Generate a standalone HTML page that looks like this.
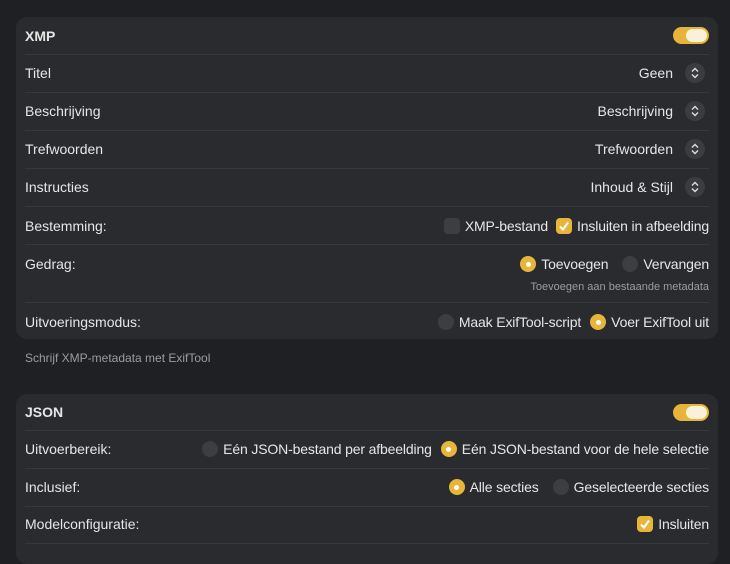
<!DOCTYPE html><html><head><style>
body{margin:0;width:730px;height:548px;background:#1f2023;font-family:"Liberation Sans",sans-serif;color:#e6e6e6;position:relative;overflow:hidden;font-size:14px}
.p{position:absolute;left:16px;width:702px;background:#2a2b2e;border-radius:11px}
.t{position:absolute;white-space:nowrap;line-height:16px}
.sep{position:absolute;left:25px;width:684px;height:1px;background:#36383b}
.tg{position:absolute;left:673px;width:36px;height:17px;border-radius:9px;background:#e6b43a}
.tg:after{content:"";position:absolute;right:2px;top:2px;width:21px;height:13px;border-radius:7px;background:#fbf1d8}
.st{position:absolute;left:685px;width:20px;height:20px;border-radius:50%;background:#3b3c40}
.st svg{position:absolute;left:5px;top:3px}
.row{position:absolute;right:21px;display:flex;align-items:center;height:16px;white-space:nowrap;letter-spacing:-0.15px}
.row span{margin-left:5px}
.r{width:16px;height:16px;border-radius:50%;background:#3d3e42;position:relative;flex:none;margin-left:9px}
.r.on{background:#e8b53b}.r.on:after{content:"";position:absolute;left:5.5px;top:5.5px;width:5px;height:5px;border-radius:50%;background:#fff}
.c{width:16px;height:16px;border-radius:4px;background:#3d3e42;flex:none;margin-left:8px}
.c.on{background:#e8b53b}
.b{font-weight:bold}
.s{font-size:11px;color:#9c9c9c}
</style></head><body>
<div class="p" style="top:17px;height:322px"></div>
<div class="p" style="top:394px;height:170px"></div>
<div class="t b" style="left:25px;top:28px">XMP</div><div class="tg" style="top:27px"></div>
<div class="sep" style="top:54px"></div>
<div class="t" style="left:25px;top:65px">Titel</div><div class="t" style="right:57px;top:65px">Geen</div>
<div class="st" style="top:63px"><svg width="10" height="14" viewBox="0 0 10 14"><path d="M2 5.5L5 2.5L8 5.5M2 8.5L5 11.5L8 8.5" stroke="#ddd" stroke-width="1.4" fill="none"/></svg></div>
<div class="sep" style="top:92px"></div>
<div class="t" style="left:25px;top:103px">Beschrijving</div><div class="t" style="right:57px;top:103px">Beschrijving</div>
<div class="st" style="top:101px"><svg width="10" height="14" viewBox="0 0 10 14"><path d="M2 5.5L5 2.5L8 5.5M2 8.5L5 11.5L8 8.5" stroke="#ddd" stroke-width="1.4" fill="none"/></svg></div>
<div class="sep" style="top:130px"></div>
<div class="t" style="left:25px;top:141px">Trefwoorden</div><div class="t" style="right:57px;top:141px">Trefwoorden</div>
<div class="st" style="top:139px"><svg width="10" height="14" viewBox="0 0 10 14"><path d="M2 5.5L5 2.5L8 5.5M2 8.5L5 11.5L8 8.5" stroke="#ddd" stroke-width="1.4" fill="none"/></svg></div>
<div class="sep" style="top:168px"></div>
<div class="t" style="left:25px;top:179px">Instructies</div><div class="t" style="right:57px;top:179px">Inhoud &amp; Stijl</div>
<div class="st" style="top:177px"><svg width="10" height="14" viewBox="0 0 10 14"><path d="M2 5.5L5 2.5L8 5.5M2 8.5L5 11.5L8 8.5" stroke="#ddd" stroke-width="1.4" fill="none"/></svg></div>
<div class="sep" style="top:206px"></div>
<div class="t" style="left:25px;top:218px">Bestemming:</div>
<div class="row" style="top:218px"><div class="c"></div><span>XMP-bestand</span><div class="c on"><svg width="16" height="16"><path d="M4 8.5L7 11.5L12 4.5" stroke="#fff" stroke-width="2" fill="none"/></svg></div><span>Insluiten in afbeelding</span></div>
<div class="sep" style="top:244px"></div>
<div class="t" style="left:25px;top:256px">Gedrag:</div>
<div class="row" style="top:256px"><div class="r on"></div><span>Toevoegen</span><div class="r" style="margin-left:14px"></div><span>Vervangen</span></div>
<div class="t s" style="right:21px;top:279px">Toevoegen aan bestaande metadata</div>
<div class="sep" style="top:302px"></div>
<div class="t" style="left:25px;top:314px">Uitvoeringsmodus:</div>
<div class="row" style="top:314px"><div class="r"></div><span>Maak ExifTool-script</span><div class="r on"></div><span>Voer ExifTool uit</span></div>
<div class="t s" style="left:25px;top:350px;font-size:12px">Schrijf XMP-metadata met ExifTool</div>
<div class="t b" style="left:25px;top:404px">JSON</div><div class="tg" style="top:404px"></div>
<div class="sep" style="top:430px"></div>
<div class="t" style="left:25px;top:441px">Uitvoerbereik:</div>
<div class="row" style="top:441px"><div class="r"></div><span>Eén JSON-bestand per afbeelding</span><div class="r on"></div><span>Eén JSON-bestand voor de hele selectie</span></div>
<div class="sep" style="top:468px"></div>
<div class="t" style="left:25px;top:479px">Inclusief:</div>
<div class="row" style="top:479px"><div class="r on"></div><span>Alle secties</span><div class="r" style="margin-left:14px"></div><span>Geselecteerde secties</span></div>
<div class="sep" style="top:506px"></div>
<div class="t" style="left:25px;top:516px">Modelconfiguratie:</div>
<div class="row" style="top:516px"><div class="c on"><svg width="16" height="16"><path d="M4 8.5L7 11.5L12 4.5" stroke="#fff" stroke-width="2" fill="none"/></svg></div><span>Insluiten</span></div>
<div class="sep" style="top:543px"></div>
</body></html>
